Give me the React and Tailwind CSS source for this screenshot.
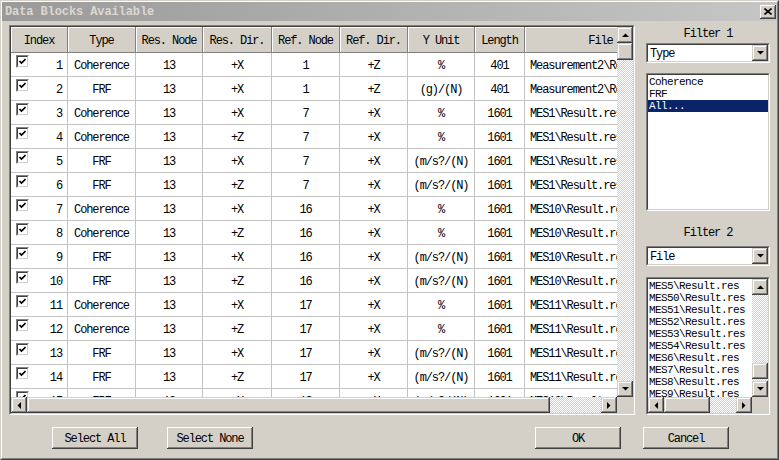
import React from "react";

const raised =
  "bg-[#d4d0c8] shadow-[inset_-1px_-1px_#404040,inset_1px_1px_#d4d0c8,inset_-2px_-2px_#808080,inset_2px_2px_#ffffff]";
const btnRaised =
  "bg-[#d4d0c8] shadow-[inset_-1px_-1px_#404040,inset_1px_1px_#ffffff,inset_-2px_-2px_#808080,inset_2px_2px_#d4d0c8]";
const dither =
  "bg-[image:repeating-conic-gradient(#ffffff_0_25%,#d4d0c8_0_50%)] bg-[length:2px_2px]";

function Arrow({ dir }) {
  const vertical = dir === "up" || dir === "down";
  const pts = {
    up: "0,4 7,4 3.5,0.5",
    down: "0,0 7,0 3.5,3.5",
    left: "4,0 4,7 0.5,3.5",
    right: "0,0 0,7 3.5,3.5",
  }[dir];
  return (
    <svg width={vertical ? 7 : 4} height={vertical ? 4 : 7} viewBox={vertical ? "0 0 7 4" : "0 0 4 7"}>
      <polygon points={pts} fill="#000" />
    </svg>
  );
}

function SBtn({ dir }) {
  return (
    <div className={`w-[16px] h-[16px] shrink-0 flex items-center justify-center ${raised}`}>
      <Arrow dir={dir} />
    </div>
  );
}

function Check() {
  return (
    <div className="w-[13px] h-[13px] shrink-0 border border-t-[#808080] border-l-[#808080] border-r-white border-b-white">
      <div className="w-full h-full bg-white border border-t-[#404040] border-l-[#404040] border-r-[#d4d0c8] border-b-[#d4d0c8] flex items-center justify-center">
        <svg width="7" height="7" viewBox="0 0 7 7">
          <polyline points="0.5,3 2.5,5 6.5,1" fill="none" stroke="#000" strokeWidth="1.7" />
        </svg>
      </div>
    </div>
  );
}

const widths = ["w-[57px]", "w-[68px]", "w-[67px]", "w-[69px]", "w-[68px]", "w-[68px]", "w-[67px]", "w-[50px]", "w-[150px]"];
const headers = ["Index", "Type", "Res. Node", "Res. Dir.", "Ref. Node", "Ref. Dir.", "Y Unit", "Length", "File"];

const U = "(m/s?/(N)";
const rows = [
  [1, "Coherence", "13", "+X", "1", "+Z", "%", "401", "Measurement2\\Result.res"],
  [2, "FRF", "13", "+X", "1", "+Z", "(g)/(N)", "401", "Measurement2\\Result.res"],
  [3, "Coherence", "13", "+X", "7", "+X", "%", "1601", "MES1\\Result.res"],
  [4, "Coherence", "13", "+Z", "7", "+X", "%", "1601", "MES1\\Result.res"],
  [5, "FRF", "13", "+X", "7", "+X", U, "1601", "MES1\\Result.res"],
  [6, "FRF", "13", "+Z", "7", "+X", U, "1601", "MES1\\Result.res"],
  [7, "Coherence", "13", "+X", "16", "+X", "%", "1601", "MES10\\Result.res"],
  [8, "Coherence", "13", "+Z", "16", "+X", "%", "1601", "MES10\\Result.res"],
  [9, "FRF", "13", "+X", "16", "+X", U, "1601", "MES10\\Result.res"],
  [10, "FRF", "13", "+Z", "16", "+X", U, "1601", "MES10\\Result.res"],
  [11, "Coherence", "13", "+X", "17", "+X", "%", "1601", "MES11\\Result.res"],
  [12, "Coherence", "13", "+Z", "17", "+X", "%", "1601", "MES11\\Result.res"],
  [13, "FRF", "13", "+X", "17", "+X", U, "1601", "MES11\\Result.res"],
  [14, "FRF", "13", "+Z", "17", "+X", U, "1601", "MES11\\Result.res"],
  [15, "FRF", "13", "+X", "18", "+X", U, "1601", "MES12\\Result.res"],
];

function Button({ children }) {
  return (
    <div className={`w-[86px] h-[22px] flex items-center justify-center pt-[1px] ${btnRaised}`}>{children}</div>
  );
}

function Combo({ value }) {
  return (
    <div className="w-[124px] h-[20px] border border-t-[#808080] border-l-[#808080] border-r-white border-b-white">
      <div className="w-full h-full bg-white border border-t-[#404040] border-l-[#404040] border-r-[#d4d0c8] border-b-[#d4d0c8] flex items-center">
        <div className="flex-1 pl-[2px] pt-[1px]">{value}</div>
        <SBtn dir="down" />
      </div>
    </div>
  );
}

const sunkenOuter = "border border-t-[#808080] border-l-[#808080] border-r-white border-b-white";
const sunkenInner = "border border-t-[#404040] border-l-[#404040] border-r-[#d4d0c8] border-b-[#d4d0c8]";

export default function App() {
  return (
    <div className="w-[779px] h-[460px] bg-[#d4d0c8] text-black text-[12px] tracking-[-1.1px] font-['Liberation_Mono','DejaVu_Sans_Mono',monospace] border border-t-[#d4d0c8] border-l-[#d4d0c8] border-r-[#404040] border-b-[#404040] overflow-hidden">
      <div className="w-full h-full border border-t-white border-l-white border-r-[#808080] border-b-[#808080] flex flex-col">
        {/* title bar */}
        <div className="h-[19px] shrink-0 flex items-center justify-between pl-[3px] pr-[1px] bg-gradient-to-r from-[#9a9a9a] to-[#c6c6c6]">
          <span className="font-bold text-[#dcd8d0] tracking-[-0.1px]">Data Blocks Available</span>
          <div className={`w-[16px] h-[14px] flex items-center justify-center ${btnRaised}`}>
            <svg width="8" height="7" viewBox="0 0 8 7">
              <path d="M0.5 0.5 L7.5 6.5 M7.5 0.5 L0.5 6.5" stroke="#000" strokeWidth="1.6" />
            </svg>
          </div>
        </div>

        {/* main */}
        <div className="flex pt-[4px] pl-[7px]">
          {/* table frame */}
          <div className={`w-[626px] h-[390px] shrink-0 ${sunkenOuter}`}>
            <div className={`w-full h-full flex flex-col ${sunkenInner}`}>
              <div className="flex h-[370px]">
                <div className="w-[606px] h-full overflow-hidden bg-white">
                  <div className="flex h-[26px]">
                    {headers.map((h, i) => (
                      <div
                        key={i}
                        className={`${widths[i]} shrink-0 flex items-center justify-center pt-[2px] bg-[#d4d0c8] border-r border-b border-[#808080] shadow-[inset_1px_1px_#ffffff] whitespace-nowrap ${i === 8 ? "pl-[2px]" : ""}`}
                      >
                        {h}
                      </div>
                    ))}
                  </div>
                  {rows.map((r, ri) => (
                    <div key={ri} className="flex h-[24px]">
                      <div className="w-[57px] shrink-0 flex justify-between pl-[5px] pr-[5px] border-r border-b border-[#c4c4c4]">
                        <div className="pt-[2px]">
                          <Check />
                        </div>
                        <div className="self-center pt-[2px]">{r[0]}</div>
                      </div>
                      {r.slice(1).map((c, ci) => (
                        <div
                          key={ci}
                          className={`${widths[ci + 1]} shrink-0 flex items-center pt-[2px] ${ci === 7 ? "justify-start pl-[5px]" : "justify-center"} border-r border-b border-[#c4c4c4] whitespace-nowrap overflow-hidden`}
                        >
                          {c}
                        </div>
                      ))}
                    </div>
                  ))}
                </div>
                {/* vertical scrollbar */}
                <div className="w-[16px] h-full flex flex-col">
                  <SBtn dir="up" />
                  <div className={`h-[17px] shrink-0 ${raised}`} />
                  <div className={`flex-1 ${dither}`} />
                  <SBtn dir="down" />
                </div>
              </div>
              <div className="flex h-[16px]">
                <SBtn dir="left" />
                <div className={`w-[523px] shrink-0 ${raised}`} />
                <div className={`w-[51px] shrink-0 ${dither}`} />
                <SBtn dir="right" />
                <div className="w-[16px] bg-[#d4d0c8]" />
              </div>
            </div>
          </div>

          {/* right panel */}
          <div className="w-[124px] ml-[11px] flex flex-col">
            <div className="h-[16px] flex items-center justify-center pt-[1px]">Filter 1</div>
            <div className="mt-[2px]">
              <Combo value="Type" />
            </div>
            <div className={`mt-[10px] w-[124px] h-[138px] ${sunkenOuter}`}>
              <div className={`w-full h-full bg-white ${sunkenInner} text-[11px] tracking-[-0.6px] leading-[12px] pt-[1px]`}>
                <div className="pl-[1px] h-[12px]">Coherence</div>
                <div className="pl-[1px] h-[12px]">FRF</div>
                <div className="pl-[1px] h-[12px] bg-[#0a246a] text-white">All...</div>
              </div>
            </div>
            <div className="mt-[13px] h-[16px] flex items-center justify-center pt-[1px]">Filter 2</div>
            <div className="mt-[6px]">
              <Combo value="File" />
            </div>
            <div className={`mt-[11px] w-[124px] h-[138px] ${sunkenOuter}`}>
              <div className={`w-full h-full bg-white ${sunkenInner} flex flex-col`}>
                <div className="flex h-[118px]">
                  <div className="w-[104px] h-full overflow-hidden text-[11px] tracking-[-0.6px] leading-[12px] whitespace-nowrap pl-[1px] pt-[1px]">
                    {["MES5", "MES50", "MES51", "MES52", "MES53", "MES54", "MES6", "MES7", "MES8", "MES9"].map((m) => (
                      <div key={m} className="h-[12px]">{m}\Result.res</div>
                    ))}
                  </div>
                  <div className="w-[16px] h-full flex flex-col">
                    <SBtn dir="up" />
                    <div className={`h-[68px] shrink-0 ${dither}`} />
                    <div className={`h-[16px] shrink-0 ${raised}`} />
                    <div className={`flex-1 ${dither}`} />
                    <SBtn dir="down" />
                  </div>
                </div>
                <div className="flex h-[16px]">
                  <SBtn dir="left" />
                  <div className={`w-[46px] shrink-0 ${raised}`} />
                  <div className={`w-[26px] shrink-0 ${dither}`} />
                  <SBtn dir="right" />
                  <div className="w-[16px] bg-[#d4d0c8]" />
                </div>
              </div>
            </div>
          </div>
        </div>

        {/* buttons */}
        <div className="flex mt-[12px] pl-[50px]">
          <Button>Select All</Button>
          <div className="ml-[29px]">
            <Button>Select None</Button>
          </div>
          <div className="ml-[282px]">
            <Button>OK</Button>
          </div>
          <div className="ml-[22px]">
            <Button>Cancel</Button>
          </div>
        </div>
      </div>
    </div>
  );
}
